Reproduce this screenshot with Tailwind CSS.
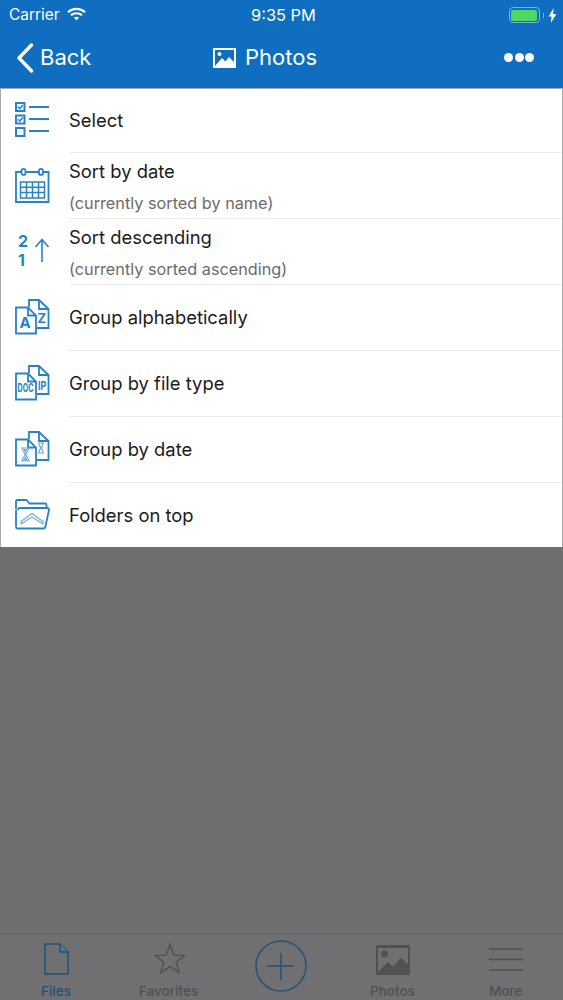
<!DOCTYPE html>
<html>
<head>
<meta charset="utf-8">
<script src="https://cdn.jsdelivr.net/npm/@tailwindcss/browser@4"></script>
</head>
<body class="m-0 bg-[#6f6e70]">
<div class="w-[563px] h-[1000px] overflow-hidden flex flex-col bg-[#6f6e70] font-['Inter','Liberation_Sans',sans-serif]">
  <!-- Header -->
  <header class="h-[88px] shrink-0 bg-[#0f6ebf] text-white flex flex-col">
    <div class="h-[30px] relative flex items-center justify-between pl-[9px] pr-[6px] text-[15.400px]">
      <div class="flex items-center gap-[8px]">
        <span>Carrier</span>
        <svg width="19" height="14" viewBox="0 0 19 14" fill="none" stroke="white" class="-mt-[1px]">
          <path d="M1 5.200C5.800 .7 13.200 .7 18 5.200" stroke-width="2.200"/>
          <path d="M4 8.200c3-2.600 8-2.600 11 0" stroke-width="2.200"/>
          <path d="M6.800 10.600c1.500-1.100 3.900-1.100 5.400 0L9.500 13.400z" fill="white" stroke="none"/>
        </svg>
      </div>
      <span class="absolute left-[251px] top-[3px] text-[16.400px]">9:35 PM</span>
      <div class="flex items-center gap-[3px]">
        <div class="w-[31px] h-[16px] rounded-[4px] border border-[#7fb2dc] p-[1.500px]"><div class="w-full h-full rounded-[2px] bg-[#4cd964]"></div></div>
        <div class="w-[1.500px] h-[5px] bg-[#7fb2dc]"></div>
        <svg width="9" height="15" viewBox="0 0 9 15" fill="white" class="ml-[1px]"><path d="M5.600 0 .6 8.400h3L2.800 15l5.600-9H5.100z"/></svg>
      </div>
    </div>
    <div class="relative flex-1 flex items-center justify-between pl-[16px] pr-[29px] pb-[2px] -mt-[1px]">
      <div class="flex items-center gap-[6px]">
        <svg width="18" height="30" viewBox="0 0 18 30" fill="none" stroke="white" stroke-width="3.400" stroke-linecap="round" stroke-linejoin="round"><path d="M15.500 2 3 15l12.500 13"/></svg>
        <span class="text-[22px]">Back</span>
      </div>
      <div class="absolute left-[198px] top-0 bottom-[2px] flex items-center gap-[9px] ml-[15px]">
        <svg width="23" height="20" viewBox="0 0 23 20"><rect width="23" height="20" fill="white"/><rect x="2" y="2" width="19" height="16" fill="#0f6ebf"/><circle cx="6.500" cy="6" r="2" fill="white"/><path d="M2 18l7-8 3.500 3.500L16 9l5 5v4z" fill="white"/></svg>
        <span class="text-[22px]">Photos</span>
      </div>
      <div class="flex items-center gap-[1.500px]">
        <div class="w-[9px] h-[9px] rounded-full bg-white"></div>
        <div class="w-[9px] h-[9px] rounded-full bg-white"></div>
        <div class="w-[9px] h-[9px] rounded-full bg-white"></div>
      </div>
    </div>
  </header>

  <!-- Menu -->
  <div class="h-[459px] shrink-0 bg-white border-x border-t border-[#a9a9a9] text-[#1c1c1c] text-[18.400px]">
    <div class="h-[64px] flex">
      <div class="w-[68px] shrink-0 flex items-center pl-[14px] pb-[4px]">
        <svg width="36" height="36" viewBox="0 0 36 36" fill="none" stroke="#2a82c6" stroke-width="2">
          <rect x="1" y="2" width="8.500" height="8"/><path d="M3 5.800l1.800 1.800 3-3.500" stroke-width="1.500"/>
          <rect x="1" y="14.500" width="8.500" height="8"/><path d="M3 18.300l1.800 1.800 3-3.500" stroke-width="1.500"/>
          <rect x="1" y="27" width="8.500" height="8"/>
          <path d="M14 6h20M14 18h20M14 30h20" stroke-width="1.800"/>
        </svg>
      </div>
      <div class="flex-1 flex items-center border-b border-[#ececec]"><span>Select</span></div>
    </div>
    <div class="h-[66px] flex">
      <div class="w-[68px] shrink-0 flex items-center pl-[14px]">
        <svg width="36" height="36" viewBox="0 0 36 36" fill="none" stroke="#2a82c6" stroke-width="1.800">
          <path d="M1 4h32.500v30H1z"/><rect x="6.500" y="0.900" width="4" height="6" rx="2" fill="white"/><rect x="24" y="0.900" width="4" height="6" rx="2" fill="white"/>
          <path d="M5.500 14h24v16h-24zM5.500 19.300h24M5.500 24.600h24M11.500 14v16M17.500 14v16M23.500 14v16" stroke-width="1.500"/>
        </svg>
      </div>
      <div class="flex-1 flex flex-col border-b border-[#ececec] pt-[6px]"><span class="leading-[24px]">Sort by date</span><span class="text-[16.250px] text-[#6b6b6b] leading-[20px] mt-[10px]">(currently sorted by name)</span></div>
    </div>
    <div class="h-[66px] flex">
      <div class="w-[68px] shrink-0 flex items-center pl-[14px]">
        <svg width="36" height="44" viewBox="0 0 36 44" fill="none" stroke="#2a82c6">
          <text x="3" y="17" font-size="16" font-weight="700" fill="#2a82c6" stroke="none" font-family="Inter, sans-serif">2</text>
          <text x="3" y="36" font-size="16" font-weight="700" fill="#2a82c6" stroke="none" font-family="Inter, sans-serif">1</text>
          <path d="M27 32V9.500M20.500 17 27 9.500l6.500 7.500" stroke-width="1.600"/>
        </svg>
      </div>
      <div class="flex-1 flex flex-col border-b border-[#ececec] pt-[6px]"><span class="leading-[24px]">Sort descending</span><span class="text-[16.250px] text-[#6b6b6b] leading-[20px] mt-[10px]">(currently sorted ascending)</span></div>
    </div>
    <div class="h-[66px] flex">
      <div class="w-[68px] shrink-0 flex items-center pl-[14px] pb-[2px]">
        <svg width="36" height="36" viewBox="0 0 36 36" fill="none" stroke="#2a82c6" stroke-width="1.800">
          <path d="M14 8V1h10l9.500 9v19H22"/><path d="M24 1v9h9.500"/>
          <path d="M1 8.500h12l8 8v18H1z" fill="white"/><path d="M13 8.500v8h8"/>
          <text x="4.500" y="29" font-size="15" font-weight="700" fill="#2a82c6" stroke="none" font-family="Inter, sans-serif">A</text>
          <text x="22.500" y="24" font-size="13" font-weight="700" fill="#2a82c6" stroke="none" font-family="Inter, sans-serif">Z</text>
        </svg>
      </div>
      <div class="flex-1 flex items-center border-b border-[#ececec]"><span>Group alphabetically</span></div>
    </div>
    <div class="h-[66px] flex">
      <div class="w-[68px] shrink-0 flex items-center pl-[14px] pb-[2px]">
        <svg width="36" height="36" viewBox="0 0 36 36" fill="none" stroke="#2a82c6" stroke-width="1.800">
          <path d="M14 8V1h10l9.500 9v19H22"/><path d="M24 1v9h9.500"/>
          <path d="M1 8.500h12l8 8v18H1z" fill="white"/><path d="M13 8.500v8h8"/>
          <text transform="translate(2.500 26.500) scale(.6 1)" font-size="12" font-weight="700" fill="#2a82c6" stroke="none" font-family="Inter, sans-serif">DOC</text>
          <text transform="translate(23 24.500) scale(.75 1)" font-size="12" font-weight="700" fill="#2a82c6" stroke="none" font-family="Inter, sans-serif">IP</text>
        </svg>
      </div>
      <div class="flex-1 flex items-center border-b border-[#ececec]"><span>Group by file type</span></div>
    </div>
    <div class="h-[66px] flex">
      <div class="w-[68px] shrink-0 flex items-center pl-[14px] pb-[2px]">
        <svg width="36" height="36" viewBox="0 0 36 36" fill="none" stroke="#2a82c6" stroke-width="1.800">
          <path d="M14 8V1h10l9.500 9v19H22"/><path d="M24 1v9h9.500"/>
          <path d="M1 8.500h12l8 8v18H1z" fill="white"/><path d="M13 8.500v8h8"/>
          <path d="M6 17h9M6 30h9M7.500 17c0 4 2.500 4 2.500 6.500S7.500 26 7.500 30M13.500 17c0 4-2.500 4-2.500 6.500s2.500 2.500 2.500 6.500" stroke="#6fabda" stroke-width="1.200"/>
          <path d="M8.500 18h4l-2 4zM8 29.500l2.500-4 2.500 4z" fill="#6fabda" stroke="none"/>
          <path d="M23 12h6M23 22h6M24 12c0 3 1.500 3.500 1.500 5s-1.500 2-1.500 5M28 12c0 3-1.500 3.500-1.500 5s1.500 2 1.500 5" stroke="#6fabda" stroke-width="1.200"/>
        </svg>
      </div>
      <div class="flex-1 flex items-center border-b border-[#ececec]"><span>Group by date</span></div>
    </div>
    <div class="h-[64px] flex">
      <div class="w-[68px] shrink-0 flex items-center pl-[14px]">
        <svg width="36" height="32" viewBox="0 0 36 32" fill="none" stroke="#2a82c6" stroke-width="1.800" stroke-linejoin="round">
          <path d="M1 10V2.500q0-1.500 1.500-1.500h9l3 3.500H30q1.500 0 1.500 1.500v3"/>
          <path d="M1 11v17q0 1.500 1.500 1.500h26q1.500 0 1.800-1.500L34 11q0-2-2-2H5q-2 0-2.500 2"/>
          <path d="M6 22.500 17 14.500 28 22.500V25L17 18 6 25z" stroke="#6fabda" stroke-width="1.200"/>
        </svg>
      </div>
      <div class="flex-1 flex items-center pt-[2px]"><span>Folders on top</span></div>
    </div>
  </div>

  <!-- Empty dimmed area -->
  <div class="flex-1"></div>

  <!-- Tab bar -->
  <nav class="h-[67px] shrink-0 border-t border-[#626163] bg-[#706f71] flex text-[13.500px] font-medium text-[#525152]">
    <div class="w-[113px] relative text-[#1f5379]">
      <svg class="absolute left-[44px] top-[9px]" width="25" height="32" viewBox="0 0 25 32" fill="none" stroke="#1f5379" stroke-width="1.500"><path d="M1 1h15l8 8v22H1z"/><path d="M16 1v8h8" fill="#4f7a99"/></svg>
      <span class="absolute left-[41px] top-[47px]">Files</span>
    </div>
    <div class="w-[112px] relative">
      <svg class="absolute left-[41px] top-[9px]" width="32" height="31" viewBox="0 0 33 32" fill="none" stroke="#525152" stroke-width="1.500"><path d="M16.500 2l4 10.500 11 .5-8.600 6.900 3 10.600-9.400-6-9.400 6 3-10.600L1.500 13l11-.5z"/></svg>
      <span class="absolute left-[26px] top-[47px]">Favorites</span>
    </div>
    <div class="w-[112px] relative">
      <svg class="absolute left-[30px] top-[6px]" width="52" height="52" viewBox="0 0 52 52" fill="none" stroke="#1f5379" stroke-width="1.500"><circle cx="26" cy="26" r="25"/><path d="M26 13v27M12 26h27"/></svg>
    </div>
    <div class="w-[113px] relative">
      <svg class="absolute left-[39px] top-[11px]" width="34" height="30" viewBox="0 0 34 30"><rect width="34" height="30" fill="#525152"/><rect x="2" y="3" width="30" height="24" fill="#706f71"/><circle cx="8.500" cy="9" r="3.500" fill="#525152"/><path d="M2 27l10-10 5 5 8-9 7 6v8z" fill="#525152"/></svg>
      <span class="absolute left-[33px] top-[47px]">Photos</span>
    </div>
    <div class="flex-1 relative">
      <svg class="absolute left-[39px] top-[14px]" width="34" height="24" viewBox="0 0 34 24" stroke="#525152" stroke-width="1.500"><path d="M0 1h34M0 11.500h34M0 22h34"/></svg>
      <span class="absolute left-[39px] top-[47px]">More</span>
    </div>
  </nav>
</div>
</body>
</html>
